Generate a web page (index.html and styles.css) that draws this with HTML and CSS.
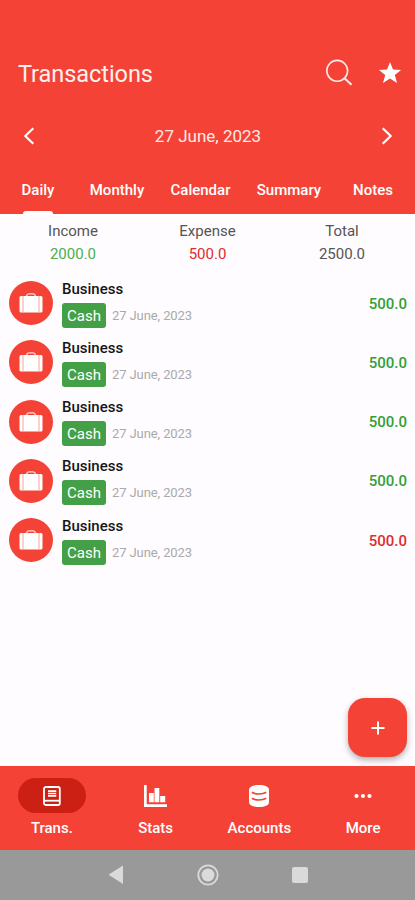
FILE: index.html
```html
<!DOCTYPE html>
<html lang="en">
<head>
<meta charset="utf-8">
<title>Transactions</title>
<link rel="stylesheet" href="styles.css">
</head>
<body>
<svg class="defs" width="0" height="0" aria-hidden="true">
  <symbol id="case" viewBox="0 0 24 20">
    <path d="M7.500 3Q8 .800 9.700.800h4.600Q16 .800 16.500 3" fill="none" stroke="#ffd9d5" stroke-width="1.300"/>
    <rect x=".5" y="3" width="23" height="16.500" rx="1.500" fill="#fff"/>
    <path d="M4 3v16.500M20 3v16.500" stroke="#f9a39c" stroke-width="1"/>
  </symbol>
</svg>
<div class="app">
  <header class="header">
    <div class="title-bar">
      <h1>Transactions</h1>
      <svg class="search" width="28" height="28" viewBox="0 0 28 28" fill="none" stroke="#ffe9e6" stroke-width="1.600"><circle cx="12.200" cy="11.800" r="10.400"/><path d="M19.500 19.200l7 6.600" stroke-width="2"/></svg>
      <svg class="star" width="24" height="24" viewBox="0 0 24 24"><path fill="#fff" d="M12 1l3 7.600 8.100.300-6.300 5.100 2.200 8-7-4.600-7 4.600 2.200-8-6.300-5.100 8.100-.300z"/></svg>
    </div>
    <div class="date-bar">
      <svg width="12" height="18" viewBox="0 0 12 18"><path d="M10.300 1.200L2.300 9l8 7.800"/></svg>
      <span>27 June, 2023</span>
      <svg width="12" height="18" viewBox="0 0 12 18"><path d="M1.700 1.200l8 7.800-8 7.800"/></svg>
    </div>
    <nav class="tabs">
      <span class="tab active">Daily</span><span class="tab">Monthly</span><span class="tab">Calendar</span><span class="tab">Summary</span><span class="tab">Notes</span>
    </nav>
  </header>
  <main class="content">
    <section class="totals">
      <div><span>Income</span><span class="income">2000.0</span></div>
      <div><span>Expense</span><span class="expense">500.0</span></div>
      <div><span>Total</span><span>2500.0</span></div>
    </section>
    <ul class="list">
      <li><span class="avatar"><svg><use href="#case"/></svg></span><div class="info"><b>Business</b><div class="meta"><span class="badge">Cash</span><time>27 June, 2023</time></div></div><span class="amount">500.0</span></li>
      <li><span class="avatar"><svg><use href="#case"/></svg></span><div class="info"><b>Business</b><div class="meta"><span class="badge">Cash</span><time>27 June, 2023</time></div></div><span class="amount">500.0</span></li>
      <li><span class="avatar"><svg><use href="#case"/></svg></span><div class="info"><b>Business</b><div class="meta"><span class="badge">Cash</span><time>27 June, 2023</time></div></div><span class="amount">500.0</span></li>
      <li><span class="avatar"><svg><use href="#case"/></svg></span><div class="info"><b>Business</b><div class="meta"><span class="badge">Cash</span><time>27 June, 2023</time></div></div><span class="amount">500.0</span></li>
      <li><span class="avatar"><svg><use href="#case"/></svg></span><div class="info"><b>Business</b><div class="meta"><span class="badge">Cash</span><time>27 June, 2023</time></div></div><span class="amount out">500.0</span></li>
    </ul>
    <button class="fab" aria-label="Add"><svg width="14" height="14" viewBox="0 0 14 14"><path d="M7 .5v13M.5 7h13" stroke="#fff" stroke-width="2"/></svg></button>
  </main>
  <nav class="bottom">
    <div class="item"><span class="pill"><svg width="18" height="20" viewBox="0 0 18 20" fill="none" stroke="#fff" stroke-width="1.800"><rect x="1" y="1" width="15.800" height="18" rx="1.800"/><path d="M1 14.700h15.800"/><path d="M5 5.200h8.300M5 7.500h8.300M5 9.800h8.300" stroke-width="1.700"/></svg></span><span>Trans.</span></div>
    <div class="item"><span class="icon"><svg width="23" height="22" viewBox="0 0 23 22" fill="#fff"><path d="M0 0h2.700v19.200H23V22H0z"/><path d="M5 8h4.800v9.300H5zM10.500 3h4.800v14.300h-4.800zM16.200 11h5v6.300h-5z"/></svg></span><span>Stats</span></div>
    <div class="item"><span class="icon"><svg width="20" height="22" viewBox="0 0 20 22"><path fill="#fff" d="M0 5C0 1.700 4 0 10 0s10 1.700 10 5v12c0 3.300-4 5-10 5S0 20.300 0 17z"/><path d="M2.800 7.300Q5.500 9 10 9t7.200-1.700M2.800 13.300Q5.500 15 10 15t7.200-1.700" fill="none" stroke="#f44336" stroke-width="1.700"/></svg></span><span>Accounts</span></div>
    <div class="item"><span class="icon"><svg width="18" height="6" viewBox="0 0 18 6" fill="#fff"><circle cx="2.500" cy="3" r="2.100"/><circle cx="9" cy="3" r="2.100"/><circle cx="15.500" cy="3" r="2.100"/></svg></span><span>More</span></div>
  </nav>
  <footer class="system">
    <svg width="16" height="20" viewBox="0 0 16 20"><path fill="#dadada" d="M16 .5v18.500L1.500 9.700z"/></svg>
    <svg width="22" height="22" viewBox="0 0 22 22"><circle cx="11" cy="11" r="9.700" fill="none" stroke="#dadada" stroke-width="1.800"/><circle cx="11" cy="11" r="6.500" fill="#dadada"/></svg>
    <svg width="16" height="16" viewBox="0 0 16 16"><rect width="16" height="16" rx="2" fill="#dadada"/></svg>
  </footer>
</div>
</body>
</html>
```
FILE: styles.css
```css
* { box-sizing: border-box; }
body { margin: 0; font-family: Roboto, sans-serif; background: #fefcfe; }
svg { display: block; flex: none; }
.defs { position: absolute; }
.app { width: 415px; height: 900px; display: flex; flex-direction: column; overflow: hidden; }
.header { height: 213.5px; background: #f44336; color: #fff; padding-top: 50px; flex: none; }
.title-bar { display: flex; align-items: center; height: 48px; padding: 0 13px 0 18px; }
h1 { margin: 0 auto 0 0; font-size: 23.500px; font-weight: 400; letter-spacing: -.05px; color: #fff0ee; }
.search { margin: -2px 25px 0 0; }
.star { margin-top: -3px; }
.date-bar { display: flex; align-items: center; justify-content: space-between; height: 76px; padding: 0 22px 0 23px; font-size: 17px; color: #ffe9e6; }
.date-bar path { fill: none; stroke: #fff; stroke-width: 2.100; }
.tabs { display: grid; grid-template-columns: 76px 82px 85px 92px 76px; height: 39.500px; }
.tab { display: flex; flex-direction: column; align-items: center; padding-top: 5px; font-size: 15px; line-height: 22px; font-weight: 500; }
.tab.active::after { content: ""; width: 30px; height: 3px; margin-top: auto; border-radius: 3px 3px 0 0; background: #fff; }
.content { flex: 1; position: relative; }
.totals { display: grid; grid-template-columns: 146px 123px 146px; padding-top: 6px; font-size: 15px; line-height: 23px; color: #555; text-align: center; }
.totals div { display: flex; flex-direction: column; }
.totals .income { color: #4caf50; }
.totals .expense { color: #df2c2c; }
.list { list-style: none; margin: 8px 0 0; padding: 0; }
.list li { display: flex; align-items: center; height: 59.250px; padding: 0 8px 0 9px; }
.avatar { display: flex; align-items: center; justify-content: center; width: 44px; height: 44px; border-radius: 50%; background: #f44336; }
.avatar svg { width: 24px; height: 20px; }
.info { margin: 1px auto 0 9px; }
.info b { display: block; font-size: 15px; line-height: 18px; font-weight: 500; color: #161616; }
.meta { display: flex; align-items: flex-start; gap: 6px; margin-top: 5px; }
.badge { width: 44px; height: 25px; border-radius: 3px; background: #43a047; color: #fff; font-size: 15px; line-height: 26px; text-align: center; }
time { font-size: 13px; line-height: 25px; letter-spacing: -.1px; color: #aaa; }
.amount { padding-top: 1px; font-size: 15px; font-weight: 500; color: #32a036; }
.amount.out { color: #df2c2c; }
.fab { position: absolute; right: 8px; bottom: 9px; width: 59px; height: 59px; padding: 0; border: 0; border-radius: 17px; background: #f44336; box-shadow: 0 3px 6px rgba(0,0,0,.3); display: grid; place-items: center; }
.bottom { height: 84px; flex: none; background: #f44336; color: #fff; display: grid; grid-template-columns: repeat(4, 1fr); }
.item { display: flex; flex-direction: column; align-items: center; padding-top: 12px; font-size: 15px; line-height: 20px; font-weight: 500; }
.pill, .icon { display: grid; place-items: center; width: 68px; height: 35px; margin-bottom: 5px; }
.pill { border-radius: 18px; background: #cb2013; }
.system { height: 50px; flex: none; background: #999; display: flex; align-items: center; justify-content: space-between; padding: 0 107px; }
```
